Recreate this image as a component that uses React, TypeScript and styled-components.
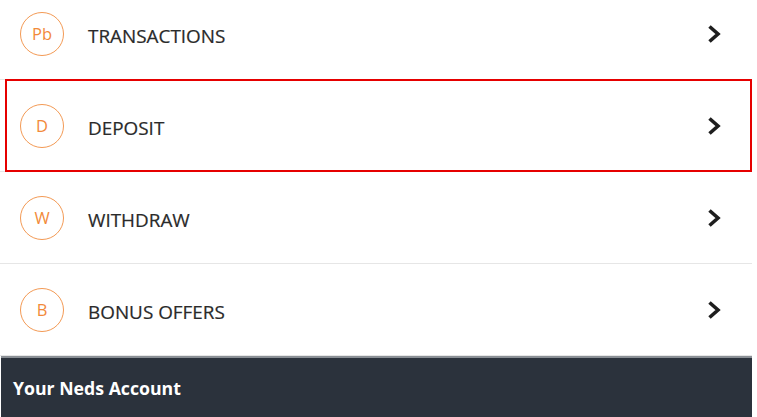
import styled, { createGlobalStyle } from 'styled-components';

const GlobalStyle = createGlobalStyle`
  html, body {
    margin: 0;
    padding: 0;
    background: #ffffff;
    overflow: hidden;
  }
  body {
    font-family: 'Open Sans', 'Noto Sans', sans-serif;
  }
`;

const items = [
  { badge: 'Pb', label: 'TRANSACTIONS' },
  { badge: 'D', label: 'DEPOSIT', highlighted: true },
  { badge: 'W', label: 'WITHDRAW' },
  { badge: 'B', label: 'BONUS OFFERS' },
];

const Chevron = () => (
  <svg width="16" height="20" viewBox="0 0 16 20" aria-hidden="true">
    <path
      d="M3.5 2.5 L12 10 L3.5 17.5"
      fill="none"
      stroke="#1e1e1e"
      strokeWidth="3.6"
      strokeLinejoin="miter"
    />
  </svg>
);

const App = () => (
  <>
    <GlobalStyle />
    <Page>
      <Menu>
        {items.map((item) => (
          <MenuRow key={item.label} $highlighted={!!item.highlighted}>
            <Badge>{item.badge}</Badge>
            <Label>{item.label}</Label>
            <Arrow>
              <Chevron />
            </Arrow>
          </MenuRow>
        ))}
      </Menu>
      <AccountBar>Your Neds Account</AccountBar>
    </Page>
  </>
);
export default App;

const Page = styled.div`
  width: 752px;
  height: 417px;
  overflow: hidden;
`;

const Menu = styled.ul`
  list-style: none;
  margin: -12px 0 0;
  padding: 0;
`;

const MenuRow = styled.li<{ $highlighted: boolean }>`
  position: relative;
  display: flex;
  align-items: center;
  height: 91px;
  padding: 0 30px 0 20px;
  border-bottom: 1px solid #e6e6e6;
  &::after {
    content: '';
    display: ${({ $highlighted }) => ($highlighted ? 'block' : 'none')};
    position: absolute;
    top: -1px;
    bottom: -1px;
    left: 5px;
    right: 0;
    border: 2px solid #e60000;
    pointer-events: none;
  }
`;

const Badge = styled.span`
  box-sizing: border-box;
  width: 44px;
  height: 44px;
  border-radius: 50%;
  border: 1.5px solid #f39a55;
  color: #f28a3a;
  font-size: 16.5px;
  display: flex;
  align-items: center;
  justify-content: center;
  flex-shrink: 0;
  padding-bottom: 1px;
`;

const Label = styled.span`
  flex: 1;
  margin: 4px 0 0 24px;
  font-size: 18.9px;
  color: #2a2a2a;
  -webkit-text-stroke: 0.2px #2a2a2a;
`;

const Arrow = styled.span`
  display: flex;
  align-items: center;
`;

const AccountBar = styled.div`
  height: 60px;
  background: #2b323c;
  border-top: 2px solid #8a8f95;
  color: #ffffff;
  font-weight: 700;
  font-size: 17.7px;
  display: flex;
  align-items: center;
  padding: 0 13px 6px 12px;
  margin-left: 1px;
`;
